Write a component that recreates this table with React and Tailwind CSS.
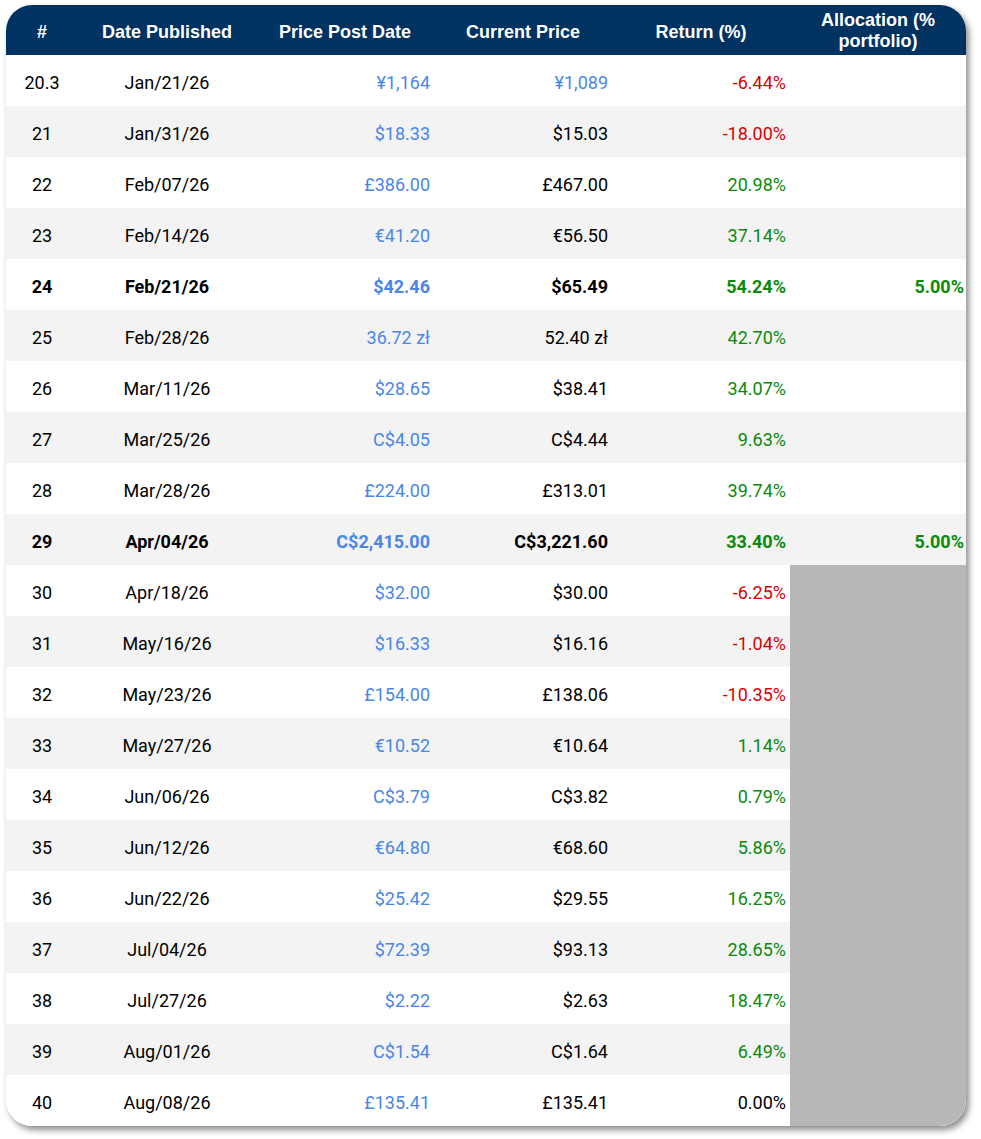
import React from "react";

const rows = [
  { n: "20.3", date: "Jan/21/26", post: "¥1,164", cur: "¥1,089", curBlue: true, ret: "-6.44%", tone: "neg" },
  { n: "21", date: "Jan/31/26", post: "$18.33", cur: "$15.03", ret: "-18.00%", tone: "neg" },
  { n: "22", date: "Feb/07/26", post: "£386.00", cur: "£467.00", ret: "20.98%", tone: "pos" },
  { n: "23", date: "Feb/14/26", post: "€41.20", cur: "€56.50", ret: "37.14%", tone: "pos" },
  { n: "24", date: "Feb/21/26", post: "$42.46", cur: "$65.49", ret: "54.24%", tone: "pos", bold: true, alloc: "5.00%" },
  { n: "25", date: "Feb/28/26", post: "36.72 zł", cur: "52.40 zł", ret: "42.70%", tone: "pos" },
  { n: "26", date: "Mar/11/26", post: "$28.65", cur: "$38.41", ret: "34.07%", tone: "pos" },
  { n: "27", date: "Mar/25/26", post: "C$4.05", cur: "C$4.44", ret: "9.63%", tone: "pos" },
  { n: "28", date: "Mar/28/26", post: "£224.00", cur: "£313.01", ret: "39.74%", tone: "pos" },
  { n: "29", date: "Apr/04/26", post: "C$2,415.00", cur: "C$3,221.60", ret: "33.40%", tone: "pos", bold: true, alloc: "5.00%" },
  { n: "30", date: "Apr/18/26", post: "$32.00", cur: "$30.00", ret: "-6.25%", tone: "neg", closed: true },
  { n: "31", date: "May/16/26", post: "$16.33", cur: "$16.16", ret: "-1.04%", tone: "neg", closed: true },
  { n: "32", date: "May/23/26", post: "£154.00", cur: "£138.06", ret: "-10.35%", tone: "neg", closed: true },
  { n: "33", date: "May/27/26", post: "€10.52", cur: "€10.64", ret: "1.14%", tone: "pos", closed: true },
  { n: "34", date: "Jun/06/26", post: "C$3.79", cur: "C$3.82", ret: "0.79%", tone: "pos", closed: true },
  { n: "35", date: "Jun/12/26", post: "€64.80", cur: "€68.60", ret: "5.86%", tone: "pos", closed: true },
  { n: "36", date: "Jun/22/26", post: "$25.42", cur: "$29.55", ret: "16.25%", tone: "pos", closed: true },
  { n: "37", date: "Jul/04/26", post: "$72.39", cur: "$93.13", ret: "28.65%", tone: "pos", closed: true },
  { n: "38", date: "Jul/27/26", post: "$2.22", cur: "$2.63", ret: "18.47%", tone: "pos", closed: true },
  { n: "39", date: "Aug/01/26", post: "C$1.54", cur: "C$1.64", ret: "6.49%", tone: "pos", closed: true },
  { n: "40", date: "Aug/08/26", post: "£135.41", cur: "£135.41", ret: "0.00%", tone: "flat", closed: true },
];

const toneClass = {
  neg: "text-[#dc0000]",
  pos: "text-[#0b8a0b]",
  flat: "text-black",
};

const cols = "grid grid-cols-[72px_178px_178px_178px_178px_176px]";

export default function App() {
  return (
    <div className="min-h-screen bg-white pl-[6px] pt-[5px]">
      <div className="w-[960px] overflow-hidden rounded-[26px] bg-white shadow-[3px_4px_6px_rgba(0,0,0,0.45)]">
        {/* header */}
        <div
          className={`${cols} h-[50px] items-center bg-[#003262] pt-[3px] text-[18px] font-bold leading-[18px] text-white`}
          style={{ fontFamily: "'Liberation Sans', Arial, sans-serif" }}
        >
          <div className="text-center">#</div>
          <div className="text-center">Date Published</div>
          <div className="text-center">Price Post Date</div>
          <div className="text-center">Current Price</div>
          <div className="text-center">Return (%)</div>
          <div className="-mt-[2px] text-center leading-[21px]">
            Allocation (%
            <br />
            portfolio)
          </div>
        </div>

        {/* body */}
        <div className="text-[18px] text-black" style={{ fontFamily: "Roboto, 'Liberation Sans', sans-serif" }}>
          {rows.map((r, i) => (
            <div
              key={r.n}
              className={`${cols} h-[51px] items-center pt-1 ${i % 2 ? "bg-[#f3f3f3]" : "bg-white"} ${r.bold ? "font-bold" : ""}`}
            >
              <div className="text-center">{r.n}</div>
              <div className="text-center">{r.date}</div>
              <div className="pr-1 text-right text-[#4a86e8]">{r.post}</div>
              <div className={`pr-1 text-right ${r.curBlue ? "text-[#4a86e8]" : ""}`}>{r.cur}</div>
              <div className={`pr-1 text-right ${toneClass[r.tone]}`}>{r.ret}</div>
              <div
                className={`-mt-1 flex h-[51px] items-center justify-end pr-0.5 pt-1 text-[#0b8a0b] ${r.closed ? "bg-[#b7b7b7]" : ""}`}
              >
                {r.alloc}
              </div>
            </div>
          ))}
        </div>
      </div>
    </div>
  );
}
